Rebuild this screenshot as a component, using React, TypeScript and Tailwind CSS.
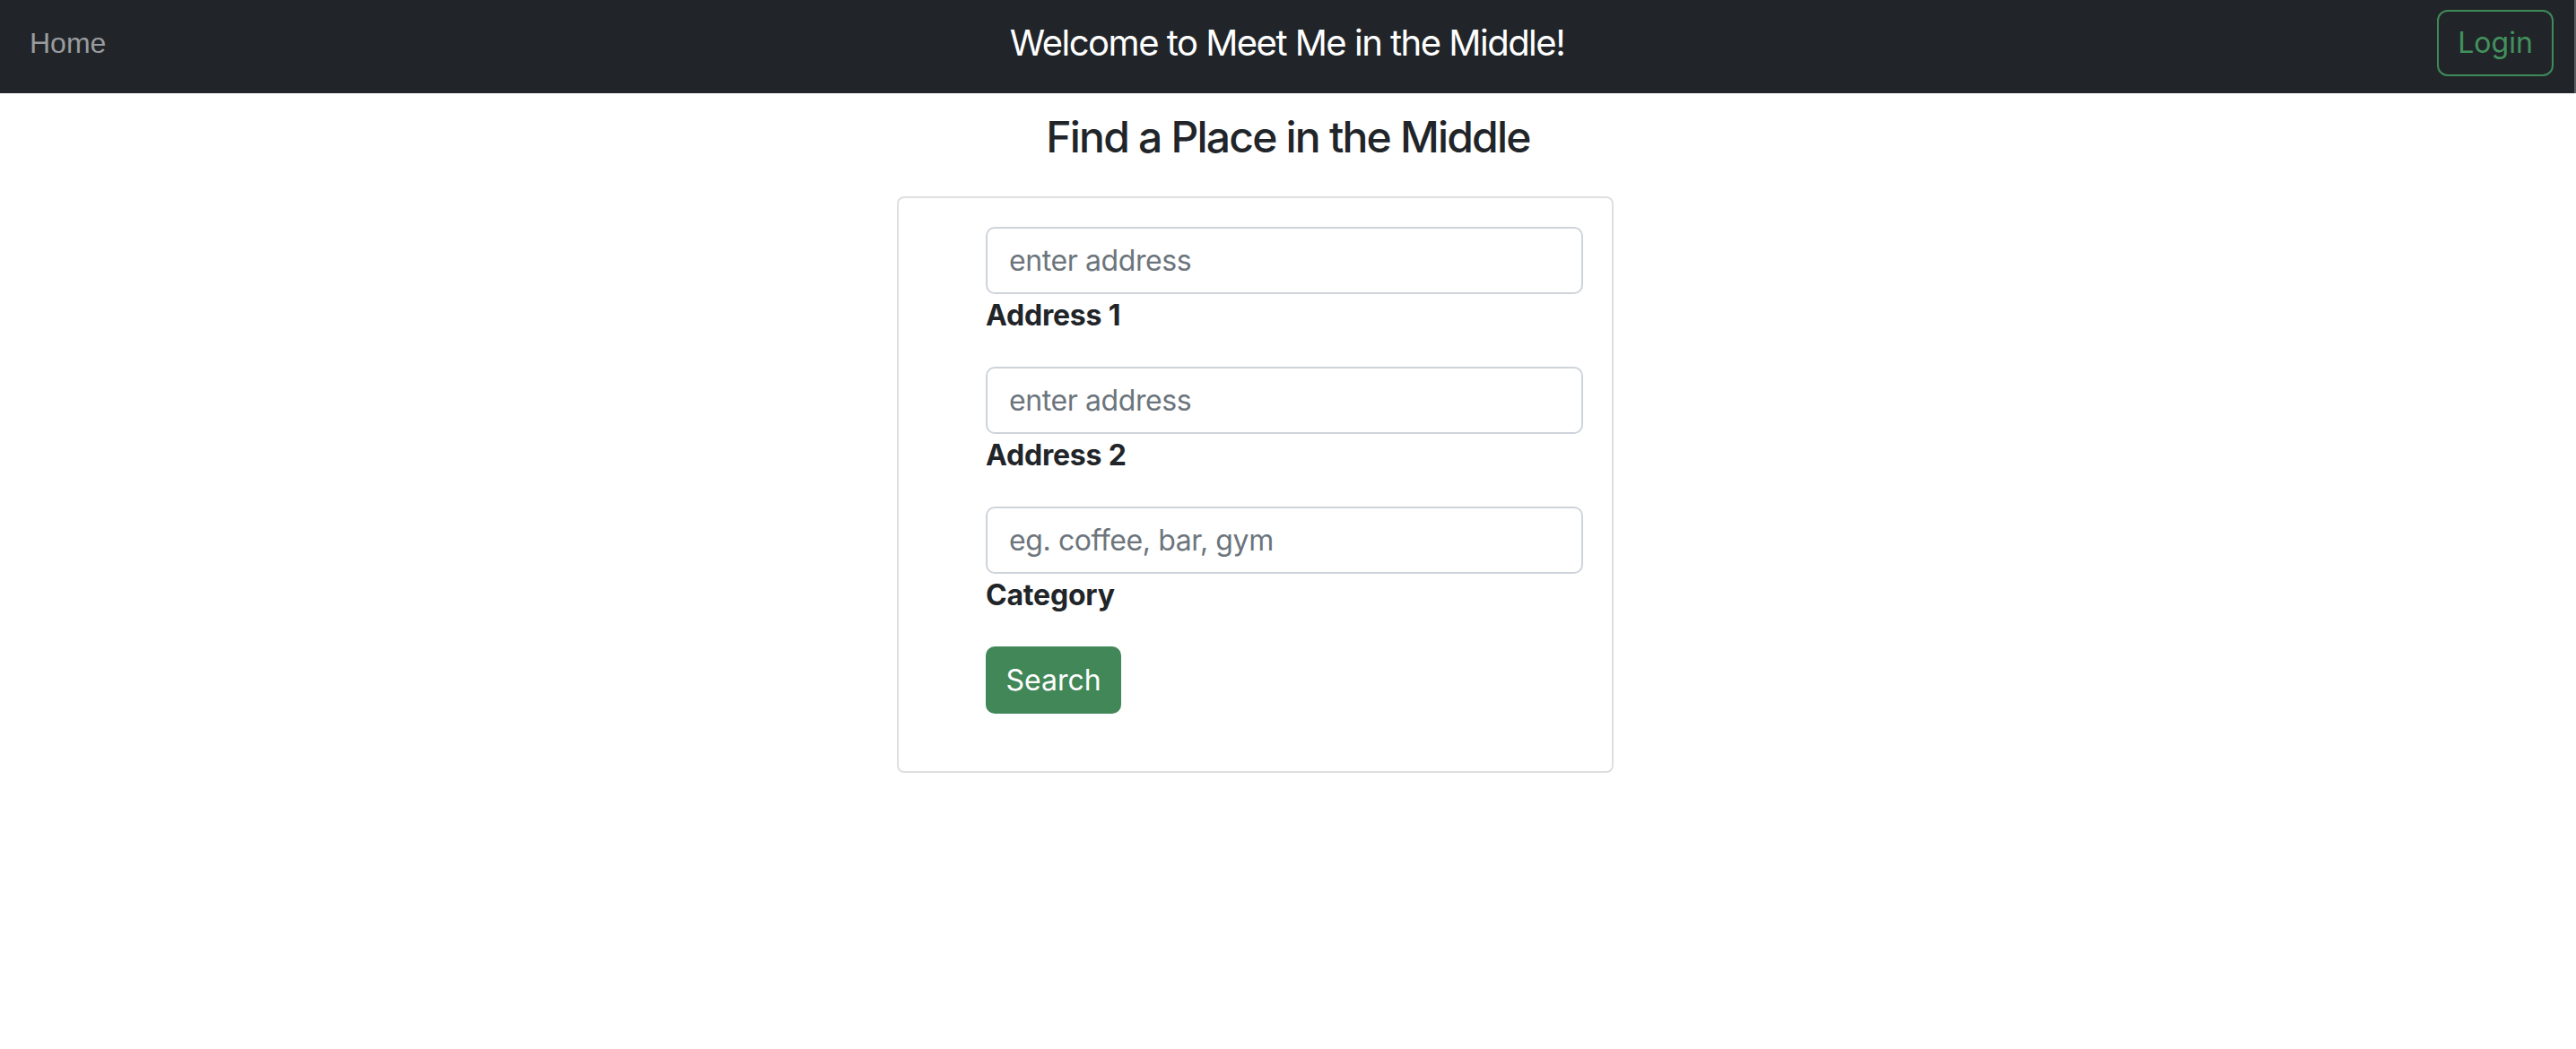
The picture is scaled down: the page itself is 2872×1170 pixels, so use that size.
import React from "react";

const inter = { fontFamily: "Inter, 'Noto Sans', sans-serif" };

function Field({ placeholder, label }: { placeholder: string; label: string }) {
  return (
    <div className="mb-[33px] flex flex-col">
      <input
        type="text"
        placeholder={placeholder}
        className="h-[75px] w-full rounded-[10px] border-2 border-[#ced4da] bg-white px-[24px] text-[32px] tracking-[-0.4px] text-[#212529] outline-none placeholder:text-[#6c757d]"
        style={inter}
      />
      <label className="h-[48px] text-[32px] font-bold leading-[48px] tracking-[-0.2px] text-[#212529]">{label}</label>
    </div>
  );
}

export default function App() {
  return (
    <div className="min-h-[1170px] w-full bg-white font-['Inter',sans-serif]">
      <nav className="grid h-[104px] grid-cols-[1fr_auto_1fr] items-start border-r-2 border-[#5a5d60] bg-[#212529] pt-[11px]">
        <div className="flex h-[74px] items-center pl-[33px]">
          <a className="font-['Liberation_Sans',Arial,sans-serif] text-[32px] text-[#999b9e]">Home</a>
        </div>
        <div className="flex h-[74px] items-center">
          <span className="text-[40px] tracking-[-1.5px] text-white">Welcome to Meet Me in the Middle!</span>
        </div>
        <div className="flex h-[74px] items-center justify-end pr-[23px]">
          <button className="flex h-[74px] w-[130px] items-center justify-center rounded-[12px] border-2 border-[#3f8a58] text-[32px] text-[#43915d]">
            Login
          </button>
        </div>
      </nav>

      <h4 className="mt-[20px] text-center text-[48px] font-medium leading-[58px] tracking-[-1.8px] text-[#212529]">
        Find a Place in the Middle
      </h4>

      <div className="mt-[37px] flex justify-center">
        <div className="mr-[73px] w-[799px] rounded-[8px] border-2 border-[#dfdfdf] pb-[32px] pl-[97px] pr-[32px] pt-[32px]">
          <Field placeholder="enter address" label="Address 1" />
          <Field placeholder="enter address" label="Address 2" />
          <Field placeholder="eg. coffee, bar, gym" label="Category" />
          <button className="mb-[32px] flex h-[75px] w-[151px] items-center justify-center rounded-[10px] bg-[#418757] text-[32px] text-white">
            Search
          </button>
        </div>
      </div>
    </div>
  );
}
